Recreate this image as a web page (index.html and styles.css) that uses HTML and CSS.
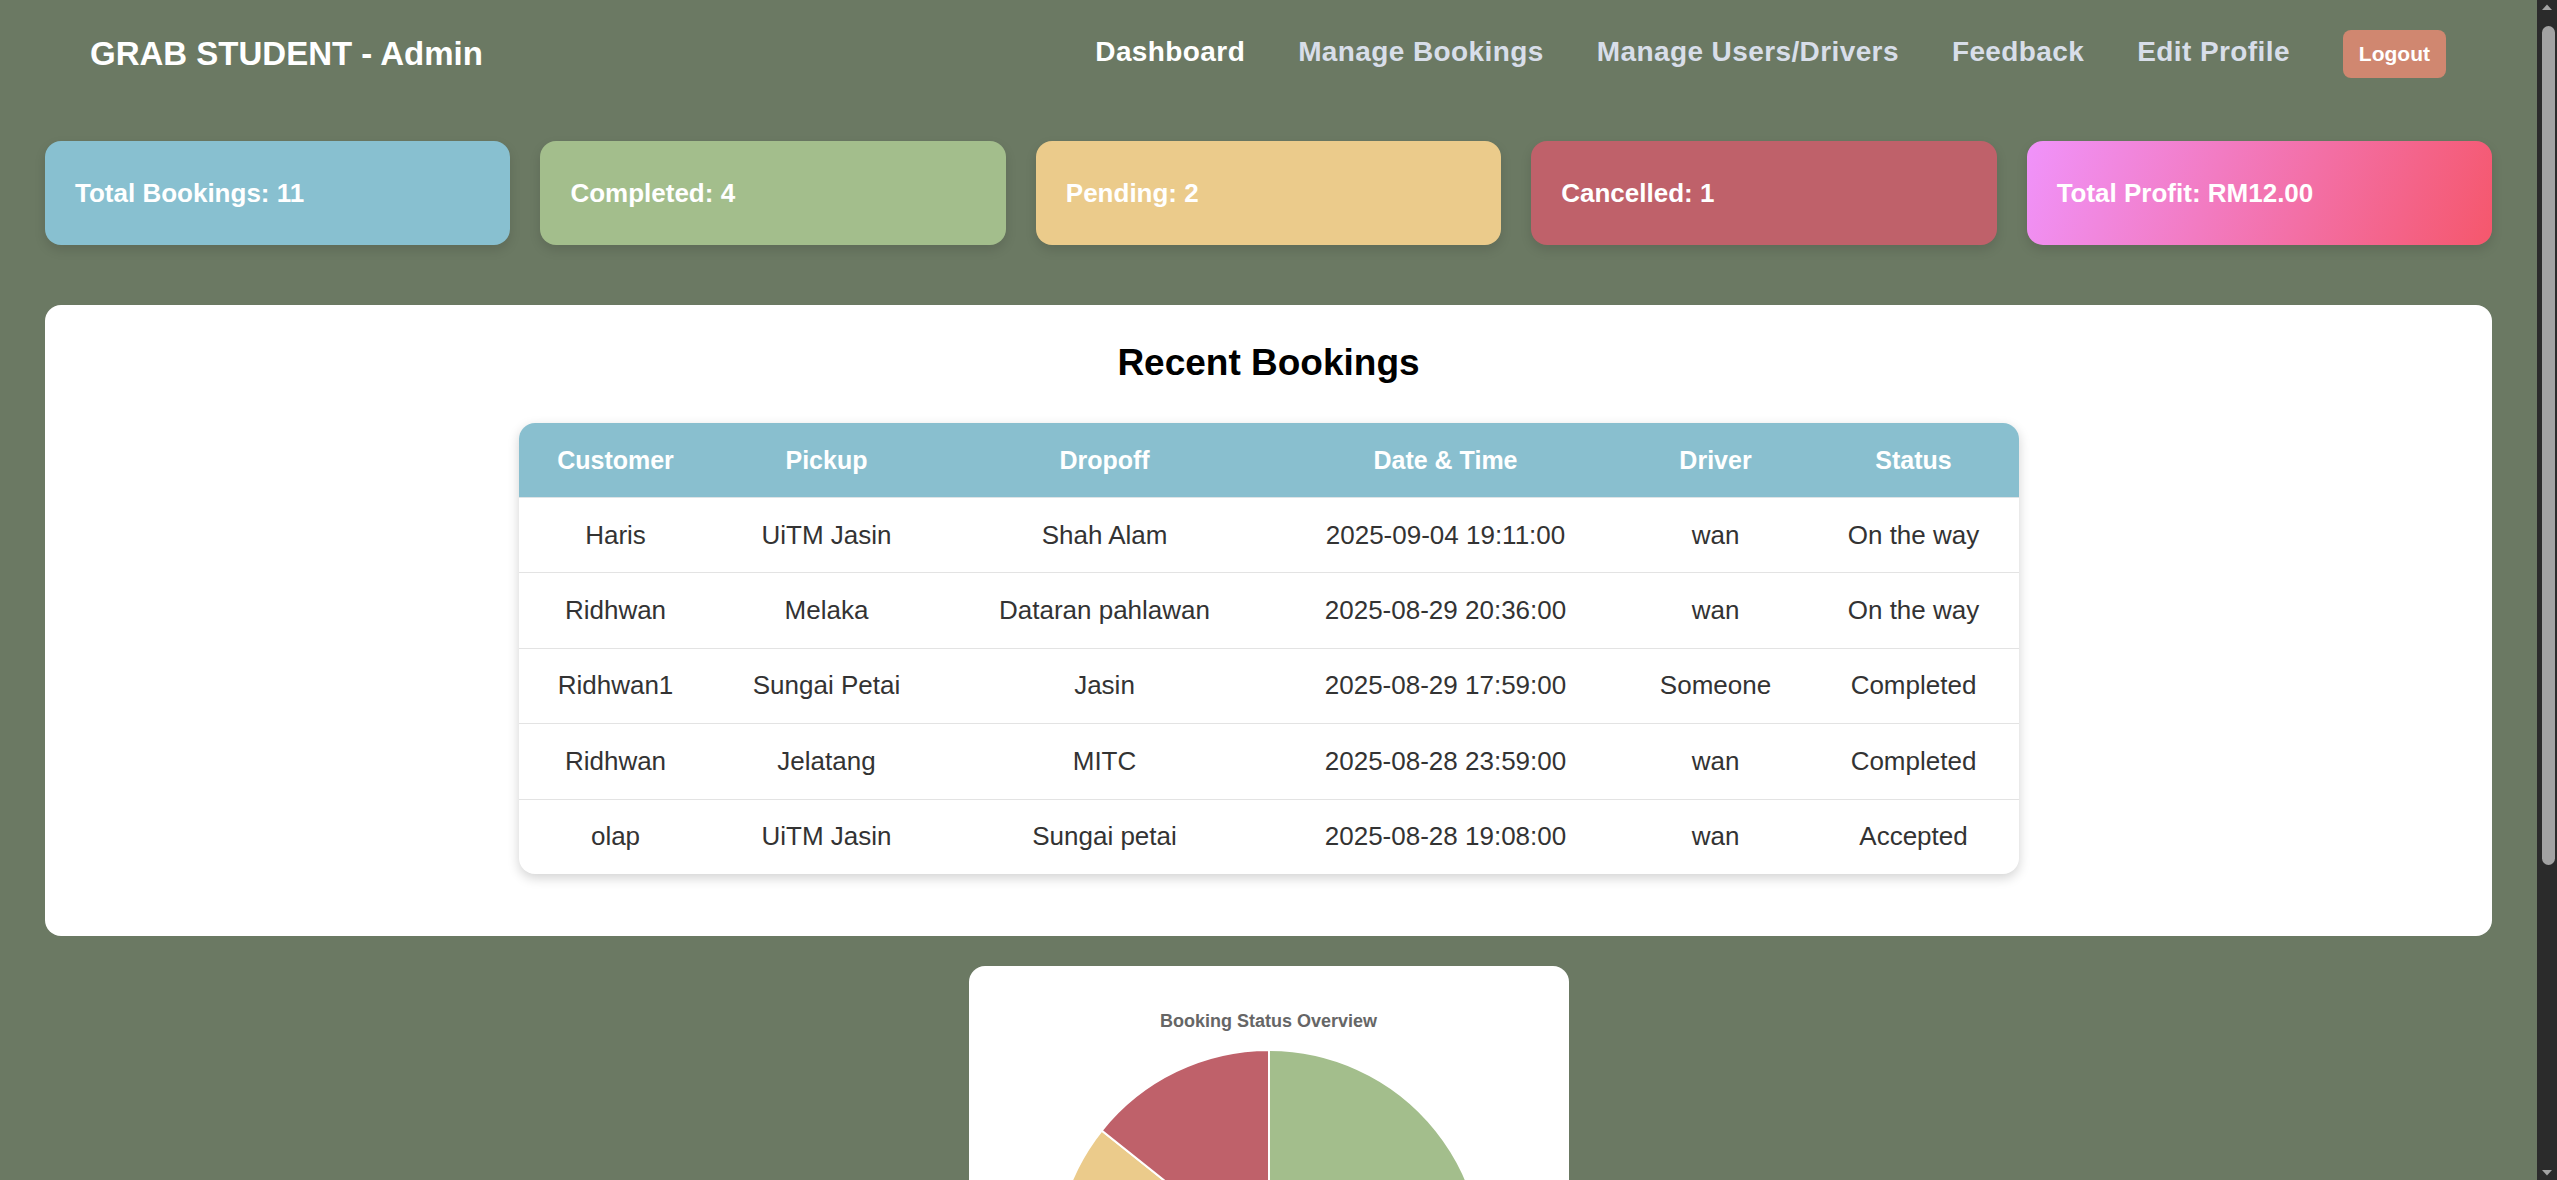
FILE: index.html
```html
<!DOCTYPE html>
<html lang="en">
<head>
<meta charset="utf-8">
<title>GRAB STUDENT - Admin Dashboard</title>
<link rel="stylesheet" href="styles.css">
</head>
<body>
<div class="page">
<header class="topbar">
  <div class="brand">GRAB STUDENT - Admin</div>
  <nav class="nav">
    <a class="nav-link active" href="#">Dashboard</a>
    <a class="nav-link" href="#">Manage Bookings</a>
    <a class="nav-link" href="#">Manage Users/Drivers</a>
    <a class="nav-link" href="#">Feedback</a>
    <a class="nav-link" href="#">Edit Profile</a>
    <a class="logout" href="#">Logout</a>
  </nav>
</header>

<main class="content">
  <section class="stats">
    <div class="stat stat-total">Total Bookings: 11</div>
    <div class="stat stat-completed">Completed: 4</div>
    <div class="stat stat-pending">Pending: 2</div>
    <div class="stat stat-cancelled">Cancelled: 1</div>
    <div class="stat stat-profit">Total Profit: RM12.00</div>
  </section>

  <section class="panel">
    <h2 class="panel-title">Recent Bookings</h2>
    <table class="bookings">
      <colgroup>
        <col class="c-customer"><col class="c-pickup"><col class="c-dropoff">
        <col class="c-date"><col class="c-driver"><col class="c-status">
      </colgroup>
      <thead>
        <tr><th>Customer</th><th>Pickup</th><th>Dropoff</th><th>Date &amp; Time</th><th>Driver</th><th>Status</th></tr>
      </thead>
      <tbody>
        <tr><td>Haris</td><td>UiTM Jasin</td><td>Shah Alam</td><td>2025-09-04 19:11:00</td><td>wan</td><td>On the way</td></tr>
        <tr><td>Ridhwan</td><td>Melaka</td><td>Dataran pahlawan</td><td>2025-08-29 20:36:00</td><td>wan</td><td>On the way</td></tr>
        <tr><td>Ridhwan1</td><td>Sungai Petai</td><td>Jasin</td><td>2025-08-29 17:59:00</td><td>Someone</td><td>Completed</td></tr>
        <tr><td>Ridhwan</td><td>Jelatang</td><td>MITC</td><td>2025-08-28 23:59:00</td><td>wan</td><td>Completed</td></tr>
        <tr><td>olap</td><td>UiTM Jasin</td><td>Sungai petai</td><td>2025-08-28 19:08:00</td><td>wan</td><td>Accepted</td></tr>
      </tbody>
    </table>
  </section>

  <section class="chart-card">
    <div class="chart-title">Booking Status Overview</div>
    <svg class="pie" width="560" height="534" viewBox="0 0 560 534">
      <path class="slice-completed" d="M280,232 L280,18 A214,214 0 1 1 187.15,424.81 Z"/>
      <path class="slice-pending" d="M280,232 L187.15,424.81 A214,214 0 0 1 112.69,98.57 Z"/>
      <path class="slice-cancelled" d="M280,232 L112.69,98.57 A214,214 0 0 1 280,18 Z"/>
    </svg>
  </section>
</main>
</div>
<div class="scrollbar" aria-hidden="true">
  <svg class="sb-arrow" width="20" height="20" viewBox="0 0 20 20"><path d="M5 10 L10 4.5 L15 10 Z"/></svg>
  <div class="sb-thumb"></div>
  <div class="sb-space"></div>
  <svg class="sb-arrow" width="20" height="20" viewBox="0 0 20 20"><path d="M5 10 L10 15.5 L15 10 Z"/></svg>
</div>
</body>
</html>
```

FILE: styles.css
```css
* { box-sizing: border-box; }

html, body {
  height: 100%;
  margin: 0;
  overflow: hidden;
  background: #6b7963;
}

body {
  display: flex;
  font-family: "Liberation Sans", Arial, sans-serif;
  color: #333;
}

.page {
  flex: 1 1 auto;
  min-width: 0;
  height: 100vh;
  overflow-y: auto;
  background: #6b7963;
}

.page::-webkit-scrollbar { width: 0; height: 0; }

/* Scrollbar imitation */
.scrollbar {
  flex: 0 0 20px;
  width: 20px;
  height: 100vh;
  background: #2b2b2b;
  display: flex;
  flex-direction: column;
}

.sb-arrow { display: block; flex: 0 0 20px; }
.sb-arrow path { fill: #a3a3a3; }

.sb-thumb {
  flex: 0 0 839px;
  width: 13px;
  margin: 6px 0 0 5px;
  background: #a3a3a3;
  border-radius: 7px;
}

.sb-space { flex: 1 1 auto; }

/* Header */
.topbar {
  height: 108px;
  padding: 0 91px 0 90px;
  display: flex;
  align-items: center;
  justify-content: space-between;
}

.brand {
  color: #fff;
  font-weight: 700;
  font-size: 33px;
  line-height: 40px;
}

.nav {
  display: flex;
  align-items: center;
  gap: 53px;
}

.nav-link {
  color: #d8dee9;
  text-decoration: none;
  font-weight: 700;
  font-size: 28px;
  letter-spacing: 0.4px;
  line-height: 34px;
  padding-bottom: 4px;
}

.nav-link.active { color: #fff; }

.logout {
  background: #d08770;
  color: #fff;
  text-decoration: none;
  font-weight: 700;
  font-size: 21px;
  line-height: 48px;
  height: 48px;
  padding: 0 16px;
  border-radius: 8px;
}

/* Content */
.content {
  padding: 33px 45px 30px;
}

.stats {
  display: flex;
  gap: 30px;
}

.stat {
  flex: 1 1 0;
  height: 104px;
  border-radius: 16px;
  padding: 0 30px;
  display: flex;
  align-items: center;
  color: #fff;
  font-weight: 700;
  font-size: 26px;
  box-shadow: 0 5px 12px rgba(0, 0, 0, 0.12);
}

.stat-total { background: #88c0d0; }
.stat-completed { background: #a3be8c; }
.stat-pending { background: #ebcb8b; }
.stat-cancelled { background: #bf616a; }
.stat-profit { background: linear-gradient(110deg, #f093fb 0%, #f5576c 100%); }

.panel {
  margin-top: 60px;
  background: #fff;
  border-radius: 16px;
  padding: 36px 30px 62px;
}

.panel-title {
  margin: 0;
  text-align: center;
  font-size: 37px;
  line-height: 44px;
  font-weight: 700;
  color: #000;
}

.bookings {
  margin: 38px auto 0;
  width: 1500px;
  table-layout: fixed;
  border-collapse: separate;
  border-spacing: 0;
  border-radius: 16px;
  overflow: hidden;
  box-shadow: 0 4px 12px rgba(0, 0, 0, 0.18);
  background: #fff;
}

.c-customer { width: 194px; }
.c-pickup { width: 228px; }
.c-dropoff { width: 328px; }
.c-date { width: 354px; }
.c-driver { width: 186px; }
.c-status { width: 210px; }

.bookings th {
  background: #89bfcf;
  color: #fff;
  font-weight: 700;
  font-size: 25px;
  height: 74px;
  padding: 0;
  text-align: center;
}

.bookings td {
  height: 75.4px;
  padding: 0;
  text-align: center;
  font-size: 26px;
  color: #333;
  border-top: 1px solid #e3e3e3;
  white-space: nowrap;
}

.bookings tbody tr:first-child td { border-top: 1px solid #dde3e6; }

/* Chart */
.chart-card {
  margin: 30px auto 0;
  width: 600px;
  background: #fff;
  border-radius: 16px;
  padding: 44px 20px 20px;
}

.chart-title {
  text-align: center;
  font-family: "Liberation Sans", Arial, sans-serif;
  font-weight: 700;
  font-size: 18px;
  line-height: 22px;
  color: #666;
}

.pie { display: block; }
.pie path { stroke: #fff; stroke-width: 2; }
.slice-completed { fill: #a3be8c; }
.slice-pending { fill: #ebcb8b; }
.slice-cancelled { fill: #bf616a; }
```
